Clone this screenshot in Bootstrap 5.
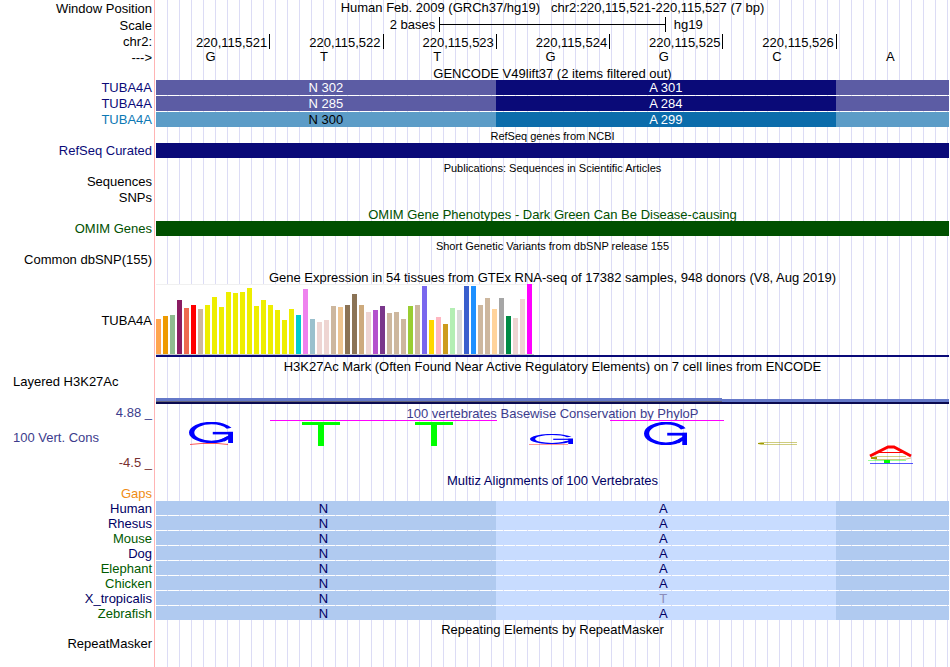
<!DOCTYPE html>
<html lang="en">
<head>
<meta charset="utf-8">
<meta name="viewport" content="width=device-width, initial-scale=1">
<title>Genome Browser - chr2:220,115,521-220,115,527</title>
<link href="https://cdn.jsdelivr.net/npm/bootstrap@5.3.0/dist/css/bootstrap.min.css" rel="stylesheet">
<style>
  body { font: 13px/16px "Liberation Sans", Arial, sans-serif; color: #000; background: #fff; }
  .browser {
    min-height: 100vh; padding-right: 1px;
    background:
      linear-gradient(#ffb4b4, #ffb4b4) 154px 0 / 1px 100% no-repeat,
      repeating-linear-gradient(90deg, transparent 0 11px, #dcdcf5 11px 12px) 156px 0 no-repeat;
  }
  .track { display: grid; grid-template-columns: 152px minmax(0, 1fr); column-gap: 4px; min-height: 16px; }
  .track-name { text-align: right; white-space: nowrap; }
  .track-name.at-start { text-align: left; padding-left: 13px; }
  .track-data { grid-column: 2; min-width: 0; }
  .heading { height: 15px; line-height: 17px; text-align: center; white-space: nowrap; }
  .heading.minor { font-size: 11px; }
  .heading.top { line-height: 15px; }
  .heading.low { line-height: 20px; }
  .h-14 { min-height: 14px; line-height: 14px; }
  .h-15 { min-height: 15px; line-height: 15px; }
  .h-17 { min-height: 17px; line-height: 17px; }
  .bases { display: grid; grid-template-columns: repeat(7, minmax(0, 1fr)); }
  .bases > span { text-align: center; padding-right: 4px; }
  .bases.ruler > span { text-align: right; padding-right: 2px; margin: 0 -1px 1px 0; border-right: 1px solid #000; line-height: 17px; height: 15px; }
  .bases.ruler > span:last-child { border: 0; margin-right: 0; }
  .scale { display: grid; grid-template-columns: 5fr 4fr 5fr; line-height: 16px; }
  .scale-bar { height: 15px; border: solid #000; border-width: 0 1px; background: linear-gradient(#000, #000) 0 7px / 100% 1px no-repeat; }
  .codons { display: grid; grid-template: 15px / 3fr 3fr 1fr; text-align: center; margin-bottom: 1px; height: 15px; line-height: 15px; color: #fff; }
  .gene .codons { background: #5c5ca4; }
  .gene .codons > :nth-child(2) { background: #0a0a78; }
  .gene-alt .codons { background: #5c9cc7; }
  .gene-alt .codons > :nth-child(1) { color: #000; }
  .gene-alt .codons > :nth-child(2) { background: #0b6cab; }
  .align .codons { background: #b0caf0; grid-template-rows: 14px; height: 14px; line-height: 15px; color: #000064; }
  .align .codons > span { padding-right: 5px; }
  .align .codons > :nth-child(2) { background: #c8dcff; }
  .align .codons > .mismatch { color: #8c8cb9; }
  .solid { height: 15px; }
  .bg-navy { background: #0a0a78; }
  .bg-omim { background: #005000; }
  .c-navy { color: #0a0a78; }
  .c-teal { color: #0c78b4; }
  .c-omim { color: #005000; }
  .c-human { color: #000064; }
  .c-species { color: #005a00; }
  .c-cons { color: #3c3c8c; }
  .c-neg { color: #783030; }
  .c-gap { color: #f08c14; }
  .expr { height: 73px; border-bottom: 2px solid #0a0a78; }
  .expr-bars { width: 378px; height: 71px; gap: 2px; background: #fff; border-top: 1px solid #f0f0f0; border-bottom: 1px solid #c8c8c8; }
  .expr-bars > i { flex: 0 0 5px; }
  .signal { display: block; width: 100%; }
  .cons-names { height: 68px; line-height: 18px; }
  .cons-heading { height: 16px; line-height: 19px; }
</style>
<script src="https://cdn.jsdelivr.net/npm/bootstrap@5.3.0/dist/js/bootstrap.bundle.min.js"></script>
</head>
<body>
<main class="browser">
  <div class="track h-17"><div class="track-name">Window Position</div><div class="track-data heading top">Human Feb. 2009 (GRCh37/hg19) &nbsp; chr2:220,115,521-220,115,527 (7 bp)</div></div>
  <div class="track h-17"><div class="track-name">Scale</div>
    <div class="track-data scale"><span class="text-end pe-1">2 bases</span><span class="scale-bar"></span><span class="ps-2">hg19</span></div></div>
  <div class="track"><div class="track-name">chr2:</div>
    <div class="track-data bases ruler"><span>220,115,521</span><span>220,115,522</span><span>220,115,523</span><span>220,115,524</span><span>220,115,525</span><span>220,115,526</span><span></span></div></div>
  <div class="track h-15"><div class="track-name">---&gt;</div>
    <div class="track-data bases h-14"><span>G</span><span>T</span><span>T</span><span>G</span><span>G</span><span>C</span><span>A</span></div></div>

  <div class="track h-15"><div class="track-data heading">GENCODE V49lift37 (2 items filtered out)</div></div>
  <div class="track gene"><div class="track-name c-navy">TUBA4A</div><div class="track-data codons"><span>N 302</span><span>A 301</span><span></span></div></div>
  <div class="track gene"><div class="track-name c-navy">TUBA4A</div><div class="track-data codons"><span>N 285</span><span>A 284</span><span></span></div></div>
  <div class="track gene-alt"><div class="track-name c-teal">TUBA4A</div><div class="track-data codons"><span>N 300</span><span>A 299</span><span></span></div></div>

  <div class="track h-15"><div class="track-data heading minor">RefSeq genes from NCBI</div></div>
  <div class="track h-15"><div class="track-name c-navy">RefSeq Curated</div><div class="track-data solid bg-navy"></div></div>

  <div class="track"><div class="track-data heading minor low">Publications: Sequences in Scientific Articles</div></div>
  <div class="track"><div class="track-name">Sequences</div></div>
  <div class="track"><div class="track-name">SNPs</div></div>

  <div class="track h-15"><div class="track-data heading c-omim">OMIM Gene Phenotypes - Dark Green Can Be Disease-causing</div></div>
  <div class="track h-15"><div class="track-name c-omim">OMIM Genes</div><div class="track-data solid bg-omim"></div></div>

  <div class="track"><div class="track-data heading minor low">Short Genetic Variants from dbSNP release 155</div></div>
  <div class="track"><div class="track-name">Common dbSNP(155)</div></div>

  <div class="track"><div class="track-data heading low">Gene Expression in 54 tissues from GTEx RNA-seq of 17382 samples, 948 donors (V8, Aug 2019)</div></div>
  <div class="track"><div class="track-name align-self-center">TUBA4A</div>
    <div class="track-data expr"><div class="expr-bars d-flex align-items-end" id="expression"></div></div></div>

  <div class="track h-17"><div class="track-data heading low">H3K27Ac Mark (Often Found Near Active Regulatory Elements) on 7 cell lines from ENCODE</div></div>
  <div class="track"><div class="track-name at-start">Layered H3K27Ac</div></div>
  <div class="track h-14"><div class="track-data d-flex align-items-end">
    <svg class="signal" height="6" viewBox="0 0 793 6" preserveAspectRatio="none" shape-rendering="crispEdges" aria-hidden="true">
      <path d="M0 0H566V1H793V4H0Z" fill="#6478c8"/>
      <path d="M0 3H566V4H0Z" fill="#646478"/>
      <path d="M0 4H793V6H0Z" fill="#0a0a50"/>
    </svg></div></div>

  <div class="track">
    <div class="cons-names d-flex flex-column justify-content-between">
      <div class="track-name c-cons">4.88 _</div>
      <div class="track-name at-start c-cons">100 Vert. Cons</div>
      <div class="track-name c-neg">-4.5 _</div>
    </div>
    <div class="track-data">
      <div class="heading cons-heading c-cons">100 vertebrates Basewise Conservation by PhyloP</div>
      <svg class="signal" height="50" viewBox="0 0 793 50" preserveAspectRatio="none" role="img" aria-label="Per-base conservation scores">
        <defs>
          <symbol id="base-g" viewBox="0 0 100 100" preserveAspectRatio="none">
            <ellipse cx="51" cy="50" rx="45" ry="45" fill="none" stroke="currentColor" stroke-width="12" pathLength="360" stroke-dasharray="332 28"/>
            <rect x="85" y="58" width="16" height="42" fill="#fff" stroke="none"/>
            <rect x="54" y="47" width="46" height="12" fill="currentColor"/>
            <rect x="89" y="47" width="11" height="53" fill="currentColor"/>
            <line x1="76" y1="89" x2="94" y2="68" stroke="currentColor" stroke-width="12"/>
          </symbol>
        </defs>
        <g fill="#ff00ff" shape-rendering="crispEdges">
          <rect x="114" y="0" width="227" height="1"/>
          <rect x="454" y="0" width="114" height="1"/>
        </g>
        <g color="#0000ff">
          <use href="#base-g" x="33" y="2" width="44" height="21"/>
          <use href="#base-g" x="374" y="14" width="43" height="10"/>
          <use href="#base-g" x="488" y="2" width="43" height="23"/>
        </g>
        <g fill="#00ff00" shape-rendering="crispEdges">
          <rect x="146" y="2" width="38" height="3"/><rect x="162" y="2" width="6" height="24"/>
          <rect x="259" y="2" width="38" height="3"/><rect x="275" y="2" width="6" height="24"/>
        </g>
        <polyline points="34,24.5 45,23.5 62,23.5 72,24.5" fill="none" stroke="#ff0000" stroke-width="1" opacity=".65"/>
        <line x1="373" y1="24.5" x2="412" y2="24.5" stroke="#ff0000" opacity=".4"/>
        <g fill="none" stroke="#a09b00">
          <polyline points="641,22.5 605,22.5 602,23.5 605,24.5 641,24.5" opacity=".5"/>
          <line x1="602" y1="23.5" x2="608" y2="23.5"/>
          <polyline points="750,36.5 720,36.5 715,38 720,39.5 748,39.5 755,38" opacity=".5"/>
          <line x1="715" y1="38" x2="721" y2="38" stroke-width="2"/>
        </g>
        <g stroke="#ff0000" fill="none">
          <polyline points="714,36 732,27 738,27 755,36" stroke-width="3"/>
          <line x1="720" y1="32.5" x2="749" y2="32.5"/>
        </g>
        <line x1="712" y1="40.5" x2="750" y2="40.5" stroke="#00ff00" opacity=".4"/>
        <rect x="728" y="40" width="6" height="3" fill="#00ff00"/>
        <line x1="714" y1="43.5" x2="757" y2="43.5" stroke="#0000ff" opacity=".65"/>
      </svg>
    </div>
  </div>

  <div class="track h-15"><div class="track-data heading c-human">Multiz Alignments of 100 Vertebrates</div></div>
  <div class="track h-14"><div class="track-name c-gap">Gaps</div></div>
  <div class="track align h-15"><div class="track-name c-human">Human</div><div class="track-data codons"><span>N</span><span>A</span><span></span></div></div>
  <div class="track align h-15"><div class="track-name c-human">Rhesus</div><div class="track-data codons"><span>N</span><span>A</span><span></span></div></div>
  <div class="track align h-15"><div class="track-name c-species">Mouse</div><div class="track-data codons"><span>N</span><span>A</span><span></span></div></div>
  <div class="track align h-15"><div class="track-name c-human">Dog</div><div class="track-data codons"><span>N</span><span>A</span><span></span></div></div>
  <div class="track align h-15"><div class="track-name c-species">Elephant</div><div class="track-data codons"><span>N</span><span>A</span><span></span></div></div>
  <div class="track align h-15"><div class="track-name c-species">Chicken</div><div class="track-data codons"><span>N</span><span>A</span><span></span></div></div>
  <div class="track align h-15"><div class="track-name c-human">X_tropicalis</div><div class="track-data codons"><span>N</span><span class="mismatch">T</span><span></span></div></div>
  <div class="track align h-15"><div class="track-name c-species">Zebrafish</div><div class="track-data codons"><span>N</span><span>A</span><span></span></div></div>

  <div class="track h-15"><div class="track-data heading">Repeating Elements by RepeatMasker</div></div>
  <div class="track h-15"><div class="track-name">RepeatMasker</div></div>
</main>
<script>
  // Median expression per tissue: [bar height in px, tissue colour]
  const Y = '#eeee00', T = '#cdb79e', P = '#eed5d2';
  const tissues = [
    [35,'#ffa54f'],[38,'#ee9a00'],[39,'#8fbc8f'],[54,'#8b1c62'],[46,'#ee6a50'],[49,'#ff0000'],[45,T],
    [49,Y],[57,Y],[47,Y],[62,Y],[61,Y],[62,Y],[66,Y],[48,Y],[54,Y],[49,Y],[44,Y],[34,Y],[45,Y],
    [39,'#00cdcd'],[65,'#ee82ee'],[35,'#9ac0cd'],[32,P],[34,P],[48,T],[47,'#eec591'],[49,'#8b7355'],
    [60,'#8b7355'],[49,'#cdaa7d'],[42,P],[44,'#b452cd'],[48,'#7a378b'],[41,T],[42,T],[35,T],
    [48,'#9acd32'],[49,T],[68,'#7a67ee'],[34,'#ffd700'],[37,'#ffb6c1'],[30,'#cd9b1d'],[46,'#b4eeb4'],
    [44,'#d9d9d9'],[68,'#3a5fcd'],[68,'#1e90ff'],[49,T],[56,T],[45,'#ffd39b'],[56,'#a6a6a6'],
    [38,'#008b45'],[36,P],[55,P],[70,'#ff00ff']
  ];
  document.getElementById('expression').innerHTML =
    tissues.map(([h, c]) => `<i style="height:${h}px;background:${c}"></i>`).join('');
</script>
</body>
</html>
